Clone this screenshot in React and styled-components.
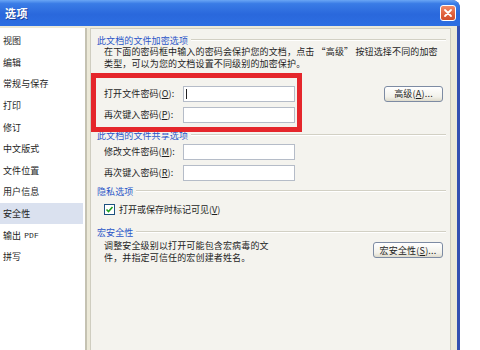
import React from 'react';
import styled, { createGlobalStyle } from 'styled-components';

const GlobalStyle = createGlobalStyle`
  html, body {
    margin: 0;
    padding: 0;
    background: #fff;
  }
  body {
    font-family: "Noto Sans CJK SC", "Liberation Sans", sans-serif;
    font-size: 9px;
    color: #1e1e1e;
  }
`;

const Stage = styled.div`
  width: 480px;
  height: 350px;
  overflow: hidden;
  background: #fff;
`;

const Window = styled.div`
  width: 460px;
  height: 370px;
  display: flex;
  flex-direction: column;
  background: #3450b0;
  border-top-right-radius: 8px;
  overflow: hidden;
`;

const TitleBar = styled.div`
  height: 26px;
  flex: none;
  display: flex;
  align-items: center;
  justify-content: space-between;
  padding: 0 4px 0 5px;
  background: linear-gradient(180deg, #6aa6f5 0%, #3a7ce6 14%, #2a68dc 55%, #2d6ee2 100%);
`;

const Title = styled.span`
  color: #fff;
  font-size: 11px;
  font-weight: bold;
  letter-spacing: 0.5px;
  text-shadow: 1px 1px 0 #1a3f9a;
`;

const CloseButton = styled.div`
  width: 14px;
  height: 14px;
  border: 1px solid #fff;
  border-radius: 3px;
  background: linear-gradient(180deg, #f08a68 0%, #e0603c 60%, #d04e2c 100%);
  display: flex;
  align-items: center;
  justify-content: center;
`;

const Body = styled.div`
  flex: 1;
  margin-right: 3px;
  padding-top: 2px;
  display: flex;
  gap: 3px;
  background: #ece9d8;
`;

const SideList = styled.div`
  width: 85px;
  flex: none;
  padding-top: 2px;
  background: #fff;
  border-right: 2px solid #c5c2b2;
`;

const SideItem = styled.div`
  height: 21.6px;
  display: flex;
  align-items: center;
  padding-left: 3px;
  margin-right: 2px;
  letter-spacing: 0.1px;
  background: ${(p) => (p.active ? '#dae1ef' : 'transparent')};
`;

const Mono = styled.span`
  font-family: "Liberation Mono", monospace;
  font-size: 8px;
  margin-left: 3px;
`;

const Panel = styled.div`
  position: relative;
  flex: 1;
  margin-right: 6px;
  padding: 5px 0 0 6px;
  background: #f4f3ee;
  border: 1px solid #cfcdc0;
  border-bottom: none;
`;

const GroupHeader = styled.div`
  display: flex;
  align-items: center;
  height: 12px;
  padding-right: 4px;
  margin-top: ${(p) => p.top || 0}px;
  color: #2b56c8;
  letter-spacing: 0.1px;

  &::after {
    content: '';
    flex: 1;
    margin-left: 3px;
    border-top: 1px solid #d2d0c4;
    border-bottom: 1px solid #fff;
  }
`;

const Desc = styled.div`
  padding-left: 7px;
  line-height: 12px;
  letter-spacing: 0.15px;
`;

const Row = styled.div`
  display: flex;
  align-items: center;
  height: ${(p) => p.h || 21}px;
  padding-left: 7px;
  padding-right: 7px;
  margin-top: ${(p) => p.top || 0}px;
`;

const Label = styled.span`
  width: 79px;
  flex: none;
  letter-spacing: 0.1px;
`;

const Input = styled.div`
  width: 108px;
  height: 14px;
  border: 1px solid #b5bcc8;
  background: #fff;
  display: flex;
  align-items: center;
  padding-left: 2px;
`;

const Caret = styled.span`
  width: 1px;
  height: 10px;
  background: #222;
`;

const Button = styled.div`
  margin-left: auto;
  margin-top: ${(p) => p.top || 0}px;
  width: ${(p) => p.w}px;
  height: 14px;
  flex: none;
  display: flex;
  align-items: center;
  justify-content: center;
  border: 1px solid #7d8ba3;
  border-radius: 3px;
  background: linear-gradient(180deg, #ffffff 0%, #f2f1ea 70%, #dedbcc 100%);
  letter-spacing: 0.2px;
`;

const Check = styled.div`
  width: 9px;
  height: 9px;
  border: 1px solid #1c5180;
  background: #fff;
  margin-right: 4px;
  display: flex;
  align-items: center;
  justify-content: center;
`;

const MacroRow = styled.div`
  display: flex;
  align-items: flex-start;
  padding-right: 7px;
  margin-top: 2px;
`;

const Highlight = styled.div`
  position: absolute;
  left: 0;
  top: 44px;
  width: 201px;
  height: 49px;
  border: 5px solid #e5262b;
  pointer-events: none;
`;

const sideItems = ['视图', '编辑', '常规与保存', '打印', '修订', '中文版式', '文件位置', '用户信息', '安全性'];

export default function App() {
  return (
    <Stage>
      <GlobalStyle />
      <Window>
        <TitleBar>
          <Title>选项</Title>
          <CloseButton>
            <svg width="10" height="10" viewBox="0 0 10 10">
              <path d="M2 2 L8 8 M8 2 L2 8" stroke="#fff" strokeWidth="1.8" strokeLinecap="round" />
            </svg>
          </CloseButton>
        </TitleBar>
        <Body>
          <SideList>
            {sideItems.map((t) => (
              <SideItem key={t} active={t === '安全性'}>
                {t}
              </SideItem>
            ))}
            <SideItem>
              输出<Mono>PDF</Mono>
            </SideItem>
            <SideItem>拼写</SideItem>
          </SideList>
          <Panel>
            <GroupHeader>此文档的文件加密选项</GroupHeader>
            <Desc>
              在下面的密码框中输入的密码会保护您的文档，点击 “高级” 按钮选择不同的加密
              <br />
              类型，可以为您的文档设置不同级别的加密保护。
            </Desc>
            <Row top={13}>
              <Label>
                打开文件密码(<u>O</u>):
              </Label>
              <Input>
                <Caret />
              </Input>
              <Button w={57}>
                高级(<u>A</u>)...
              </Button>
            </Row>
            <Row>
              <Label>
                再次键入密码(<u>P</u>):
              </Label>
              <Input />
            </Row>
            <GroupHeader top={4}>此文档的文件共享选项</GroupHeader>
            <Row>
              <Label>
                修改文件密码(<u>M</u>):
              </Label>
              <Input />
            </Row>
            <Row>
              <Label>
                再次键入密码(<u>R</u>):
              </Label>
              <Input />
            </Row>
            <GroupHeader top={2}>隐私选项</GroupHeader>
            <Row top={2} h={20}>
              <Check>
                <svg width="9" height="9" viewBox="0 0 9 9">
                  <path d="M1.5 4.5 L3.5 6.5 L7.5 2" fill="none" stroke="#21a121" strokeWidth="1.6" />
                </svg>
              </Check>
              打开或保存时标记可见(<u>V</u>)
            </Row>
            <GroupHeader top={7}>宏安全性</GroupHeader>
            <MacroRow>
              <Desc>
                调整安全级别以打开可能包含宏病毒的文
                <br />
                件，并指定可信任的宏创建者姓名。
              </Desc>
              <Button w={68} top={2}>
                宏安全性(<u>S</u>)...
              </Button>
            </MacroRow>
            <Highlight />
          </Panel>
        </Body>
      </Window>
    </Stage>
  );
}
